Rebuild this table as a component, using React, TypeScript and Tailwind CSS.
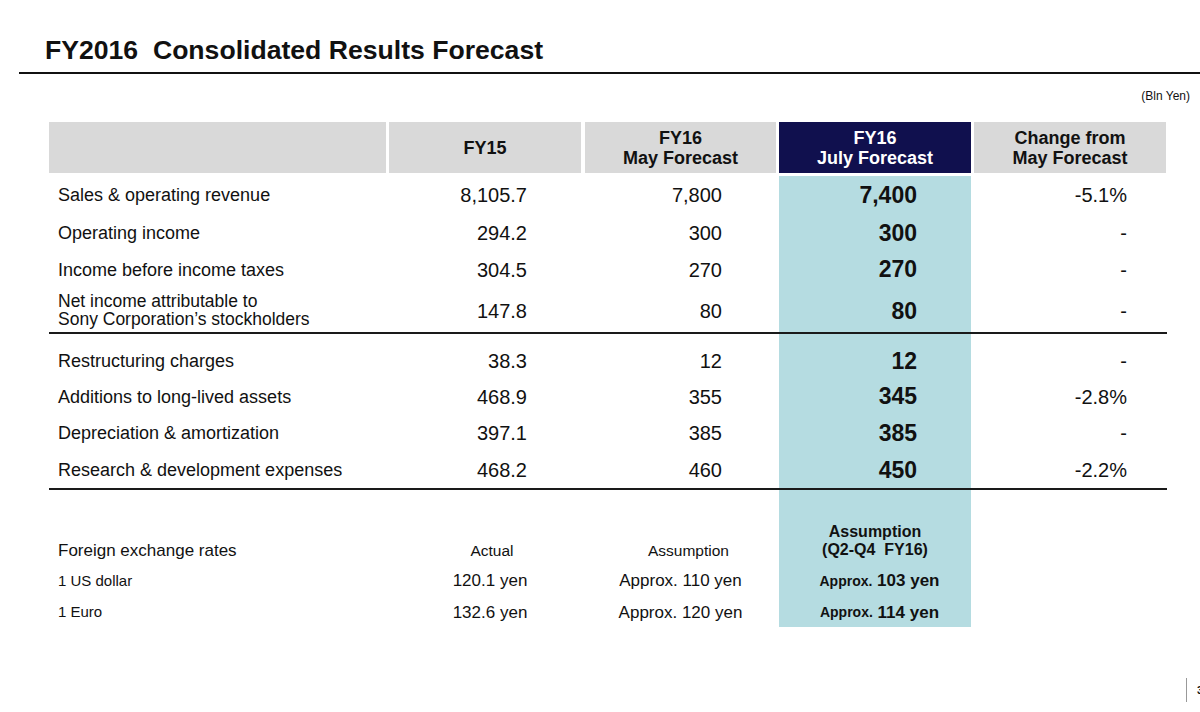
import React from "react";

const FONT = { fontFamily: '"Liberation Sans", Arial, sans-serif' };

type Cell = React.ReactNode;

function Row({
  h,
  cells,
  pt = "",
  numPt = "",
}: {
  h: string;
  cells: Cell[];
  pt?: string;
  numPt?: string;
}) {
  return (
    <div className={`flex ${h}`}>
      <div className={`w-[337px] flex items-center pl-[9px] text-[18px] leading-[18px] ${pt}`}>{cells[0]}</div>
      <div className={`w-[192px] ml-[3px] flex items-center justify-end pr-[54px] text-[20px] ${pt} ${numPt}`}>{cells[1]}</div>
      <div className={`w-[191px] ml-[4px] flex items-center justify-end pr-[54px] text-[20px] ${pt} ${numPt}`}>{cells[2]}</div>
      <div className={`w-[192px] ml-[3px] flex items-center justify-end pr-[54px] text-[23px] font-bold bg-[#b5dce1] ${pt} ${numPt}`}>{cells[3]}</div>
      <div className={`w-[192px] ml-[3px] flex items-center justify-end pr-[39px] text-[20px] ${pt} ${numPt}`}>{cells[4]}</div>
    </div>
  );
}

function Line() {
  return <div className="w-[1118px] h-[2px] bg-[#1a1a1a]" />;
}

export default function App() {
  return (
    <div className="w-[1200px] h-[712px] bg-white text-[#111] overflow-hidden" style={FONT}>
      <div className="pt-[35px] pl-[45px] text-[26.6px] leading-[30px] font-bold whitespace-pre">FY2016  Consolidated Results Forecast</div>
      <div className="ml-[19px] mt-[7px] w-[1181px] h-[2px] bg-[#111]" />
      <div className="flex justify-end pr-[10px] mt-[15px] text-[12px] leading-[14px]">(Bln Yen)</div>

      <div className="ml-[49px] mt-[19px]">
        {/* header */}
        <div className="flex h-[51px] text-[18px] leading-[20px] font-bold text-center">
          <div className="w-[337px] bg-[#d9d9d9]" />
          <div className="w-[192px] ml-[3px] bg-[#d9d9d9] flex items-center justify-center">FY15</div>
          <div className="w-[191px] ml-[4px] bg-[#d9d9d9] flex flex-col items-center justify-center">
            <span>FY16</span>
            <span>May Forecast</span>
          </div>
          <div className="w-[192px] ml-[3px] bg-[#10104e] text-white flex flex-col items-center justify-center">
            <span>FY16</span>
            <span>July Forecast</span>
          </div>
          <div className="w-[192px] ml-[3px] bg-[#d9d9d9] flex flex-col items-center justify-center">
            <span>Change from</span>
            <span>May Forecast</span>
          </div>
        </div>

        <div className="h-[3px]" />

        <Row h="h-[38px]" cells={["Sales & operating revenue", "8,105.7", "7,800", "7,400", "-5.1%"]} />
        <Row h="h-[38px]" cells={["Operating income", "294.2", "300", "300", "-"]} />
        <Row h="h-[35px]" cells={["Income before income taxes", "304.5", "270", "270", "-"]} />
        <Row
          h="h-[45px]"
          numPt="pt-[3px]"
          cells={[
            <span className="text-[17.5px] leading-[18px]">
              Net income attributable to
              <br />
              Sony Corporation’s stockholders
            </span>,
            "147.8",
            "80",
            "80",
            "-",
          ]}
        />
        <Line />
        <Row h="h-[45px]" pt="pt-[9px]" cells={["Restructuring charges", "38.3", "12", "12", "-"]} />
        <Row h="h-[35px]" cells={["Additions to long-lived assets", "468.9", "355", "345", "-2.8%"]} />
        <Row h="h-[38px]" cells={["Depreciation & amortization", "397.1", "385", "385", "-"]} />
        <Row h="h-[36px]" cells={["Research & development expenses", "468.2", "460", "450", "-2.2%"]} />
        <Line />

        {/* FX header */}
        <div className="flex h-[74px]">
          <div className="w-[337px] flex items-end pl-[9px] pb-[3px] text-[17px] leading-[20px]">Foreign exchange rates</div>
          <div className="w-[192px] ml-[3px] flex items-end justify-center pl-[14px] pb-[3px] text-[15.5px] leading-[20px]">Actual</div>
          <div className="w-[191px] ml-[4px] flex items-end justify-center pl-[16px] pb-[3px] text-[15.5px] leading-[20px]">Assumption</div>
          <div className="w-[192px] ml-[3px] bg-[#b5dce1] flex flex-col items-center justify-end pb-[5px] font-bold text-[16px] leading-[18px]">
            <span>Assumption</span>
            <span className="whitespace-pre">(Q2-Q4  FY16)</span>
          </div>
          <div className="w-[192px] ml-[3px]" />
        </div>
        {[
          ["1 US dollar", "120.1 yen", "Approx. 110 yen", "103 yen", "h-[34px]"],
          ["1 Euro", "132.6 yen", "Approx. 120 yen", "114 yen", "h-[29px]"],
        ].map((r) => (
          <div key={r[0]} className={`flex ${r[4]}`}>
            <div className="w-[337px] flex items-center pl-[9px] text-[15px]">{r[0]}</div>
            <div className="w-[192px] ml-[3px] flex items-center justify-center pl-[10px] text-[17px]">{r[1]}</div>
            <div className="w-[191px] ml-[4px] flex items-center justify-center text-[17px]">{r[2]}</div>
            <div className="w-[192px] ml-[3px] bg-[#b5dce1] flex items-center justify-center pl-[9px] font-bold">
              <span className="text-[14px]">Approx.</span>
              <span className="text-[17px]">&nbsp;{r[3]}</span>
            </div>
            <div className="w-[192px] ml-[3px]" />
          </div>
        ))}
      </div>

      <div className="flex justify-end items-center mt-[51px]">
        <div className="w-[1px] h-[24px] bg-[#999]" />
        <span className="ml-[10px] mr-[-3px] text-[11px] leading-[12px] font-bold">3</span>
      </div>
    </div>
  );
}
